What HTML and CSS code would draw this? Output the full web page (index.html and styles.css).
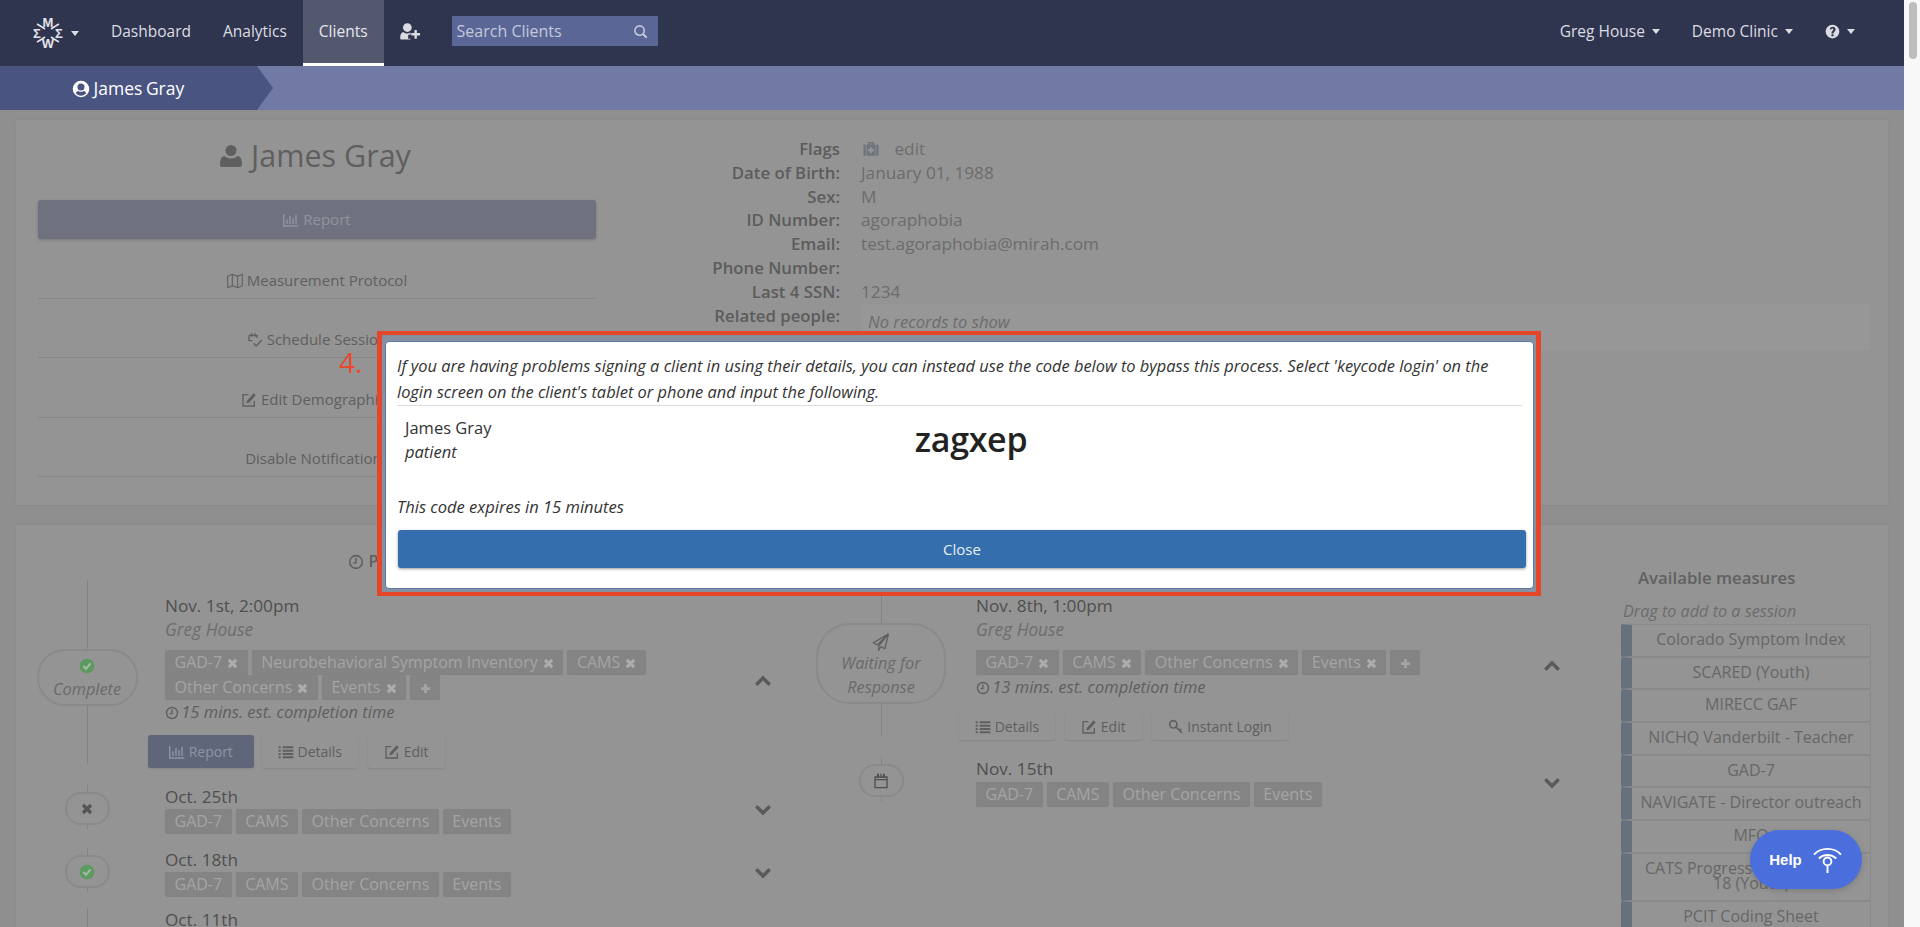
FILE: index.html

```html
<!DOCTYPE html>
<html>
	<head>
		<title>James Gray</title>
		<meta charset="UTF-8">
		<link rel="stylesheet" href="styles.css">
	</head>
	<body>
		<svg class="sprite">
			<symbol id="i-user" viewBox="0 0 24 24"><circle cx="12" cy="6.5" r="5.5"/><path d="M3 23c-1.5 0-2-1-2-2.500 0-4 .8-8 4.500-8.500 1.500 1.500 4 2.500 6.500 2.500s5-1 6.500-2.500c3.700.5 4.500 4.500 4.500 8.500 0 1.500-.5 2.500-2 2.500z"/></symbol>
			<symbol id="i-user-circle" viewBox="0 0 24 24"><path fill-rule="evenodd" d="M12 1a11 11 0 1 0 0 22 11 11 0 0 0 0-22zm0 3.500a4.700 4.700 0 1 1 0 9.400 4.700 4.700 0 0 1 0-9.400zm0 16.500c-2.800 0-5.300-1.200-7-3.200.6-1.800 2-3 3.600-3.300 1 .8 2.100 1.200 3.400 1.200s2.400-.4 3.400-1.200c1.600.3 3 1.500 3.600 3.300-1.700 2-4.200 3.200-7 3.200z"/></symbol>
			<symbol id="i-user-plus" viewBox="0 0 26 24"><circle cx="9" cy="7" r="5.500"/><path d="M1 22c-1 0-1-1-1-2 0-4 1-7 4-7.500 1.300 1.200 3 2 5 2 1.500 0 2.800-.4 4-1.200v2.700h-3v5h3v1z"/><path d="M18 10h3v4h4v3h-4v4h-3v-4h-4v-3h4z"/></symbol>
			<symbol id="i-search" viewBox="0 0 24 24"><circle cx="10.500" cy="10.500" r="7.500" fill="none" stroke="currentColor" stroke-width="2.500"/><path d="M16 16l6 6" fill="none" stroke="currentColor" stroke-width="3"/></symbol>
			<symbol id="i-question" viewBox="0 0 24 24"><path fill-rule="evenodd" d="M12 1a11 11 0 1 0 0 22 11 11 0 0 0 0-22zM10.300 16.500h3.400v3.200h-3.400zM7.500 8.500C8 6 10 4.500 12.300 4.500c2.600 0 4.700 1.700 4.700 4 0 3.500-3.300 3.500-3.300 6.500h-3.400c0-4 3-4.500 3-6.300 0-.9-.8-1.400-1.400-1.400-.9 0-1.500.6-2 1.600z"/></symbol>
			<symbol id="i-chart" viewBox="0 0 24 24"><path d="M1 3v18h22M6 11v7M10.500 6v12M15 9v9M19.500 4v14" fill="none" stroke="currentColor" stroke-width="2.200"/></symbol>
			<symbol id="i-map" viewBox="0 0 24 24"><path d="M1 5l7-3 8 3 7-3v17l-7 3-8-3-7 3zM8 2v17M16 5v17" fill="none" stroke="currentColor" stroke-width="1.600"/></symbol>
			<symbol id="i-calendar-check" viewBox="0 0 24 24"><path d="M3 5h12v4M3 5v8h5M7 2v5M12 2v5M14 21l-4-4M14 21l8-9" fill="none" stroke="currentColor" stroke-width="2"/></symbol>
			<symbol id="i-edit" viewBox="0 0 24 24"><path d="M11 4H3v17h17v-8" fill="none" stroke="currentColor" stroke-width="2"/><path d="M19 2l3 3-10 11-4 1 1-4z"/></symbol>
			<symbol id="i-clock" viewBox="0 0 24 24"><circle cx="12" cy="12" r="9.500" fill="none" stroke="currentColor" stroke-width="2.400"/><path d="M12 6v7H8" fill="none" stroke="currentColor" stroke-width="2.200"/></symbol>
			<symbol id="i-check" viewBox="0 0 24 24"><circle cx="12" cy="12" r="11" fill="#5d9a5f"/><path d="M6.500 12l4 4 7-8" fill="none" stroke="#a5bda7" stroke-width="3"/></symbol>
			<symbol id="i-times" viewBox="0 0 24 24"><path d="M4 4l16 16M20 4L4 20" fill="none" stroke="currentColor" stroke-width="6.500"/></symbol>
			<symbol id="i-plus" viewBox="0 0 24 24"><path d="M12 2v20M2 12h20" fill="none" stroke="currentColor" stroke-width="6"/></symbol>
			<symbol id="i-up" viewBox="0 0 24 16"><path d="M3 13l9-9 9 9" fill="none" stroke="currentColor" stroke-width="4.500"/></symbol>
			<symbol id="i-down" viewBox="0 0 24 16"><path d="M3 3l9 9 9-9" fill="none" stroke="currentColor" stroke-width="4.500"/></symbol>
			<symbol id="i-list" viewBox="0 0 24 24"><path d="M1 5h3M7 5h16M1 10h3M7 10h16M1 15h3M7 15h16M1 20h3M7 20h16" fill="none" stroke="currentColor" stroke-width="3"/></symbol>
			<symbol id="i-key" viewBox="0 0 24 24"><circle cx="8" cy="8" r="5.500" fill="none" stroke="currentColor" stroke-width="2.500"/><path d="M12 12l9 9M17 17l3-2" fill="none" stroke="currentColor" stroke-width="2.500"/></symbol>
			<symbol id="i-plane" viewBox="0 0 24 24"><path d="M22 1L2 13l5 3zM22 1L9 17v6l3-5 5 3z" fill="none" stroke="currentColor" stroke-width="1.700"/></symbol>
			<symbol id="i-calendar" viewBox="0 0 24 24"><path d="M3 6h18v16H3zM3 10h18" fill="none" stroke="currentColor" stroke-width="2"/><path d="M6 1h3v6H6zM11 1h2v6h-2zM15 1h3v6h-3z"/></symbol>
			<symbol id="i-medkit" viewBox="0 0 24 24"><path fill-rule="evenodd" d="M8 6V2.500h8V6h-2V4.500h-4V6zM2 6h3v15H2zM6 6h12v15H6zM19 6h3v15h-3zM10.500 9.500V12H8v3h2.500v2.500h3V15H16v-3h-2.500V9.500z"/></symbol>
		</svg>

		<div class="window">
			<div class="page">
				<nav class="navbar">
					<a class="brand">
						<svg class="logo" viewBox="0 0 34 34">
							<path d="M11 11L6 8M23 11l5-3M11 23l-5 3M23 23l5 3M11 11l3 2M23 11l-3 2M11 23l3-2M23 23l-3-2" fill="none" stroke="currentColor" stroke-width="1.600"/>
							<text x="17" y="11" class="logo-t">M</text>
							<text x="17" y="32" class="logo-t">W</text>
							<text x="6" y="21.500" class="logo-t">Σ</text>
							<text x="28" y="21.500" class="logo-t">Ʃ</text>
						</svg>
						<span class="caret"></span>
					</a>
					<a class="nav-link">Dashboard</a>
					<a class="nav-link">Analytics</a>
					<a class="nav-link active">Clients</a>
					<a class="nav-link nav-icon"><svg class="ic-plus"><use href="#i-user-plus"/></svg></a>
					<div class="search">
						<input type="text" placeholder="Search Clients">
						<svg class="ic-search"><use href="#i-search"/></svg>
					</div>
					<div class="nav-right">
						<a class="nav-link">Greg House <span class="caret"></span></a>
						<a class="nav-link">Demo Clinic <span class="caret"></span></a>
						<a class="nav-link"><svg class="ic-help"><use href="#i-question"/></svg> <span class="caret"></span></a>
					</div>
				</nav>

				<div class="crumbs">
					<div class="crumb"><svg class="ic-crumb"><use href="#i-user-circle"/></svg> James Gray</div>
				</div>

				<div class="content">
					<section class="panel patient">
						<div class="patient-left">
							<h1><svg class="ic-h1"><use href="#i-user"/></svg> James Gray</h1>
							<a class="btn-report"><svg class="ic"><use href="#i-chart"/></svg> Report</a>
							<a class="side-link"><span><svg class="ic"><use href="#i-map"/></svg> Measurement Protocol</span></a>
							<a class="side-link"><span><svg class="ic"><use href="#i-calendar-check"/></svg> Schedule Session</span></a>
							<a class="side-link"><span><svg class="ic"><use href="#i-edit"/></svg> Edit Demographics</span></a>
							<a class="side-link"><span>Disable Notifications</span></a>
						</div>
						<div class="patient-info">
							<div class="lbl">Flags</div>
							<div class="val"><svg class="ic-med"><use href="#i-medkit"/></svg> <span class="flag-edit">edit</span></div>
							<div class="lbl">Date of Birth:</div><div class="val">January 01, 1988</div>
							<div class="lbl">Sex:</div><div class="val">M</div>
							<div class="lbl">ID Number:</div><div class="val">agoraphobia</div>
							<div class="lbl">Email:</div><div class="val">test.agoraphobia@mirah.com</div>
							<div class="lbl">Phone Number:</div><div class="val"></div>
							<div class="lbl">Last 4 SSN:</div><div class="val">1234</div>
							<div class="lbl">Related people:</div><div class="val related"><em>No records to show</em></div>
						</div>
					</section>

					<section class="panel sessions">
						<div class="col past">
							<h2><svg class="ic"><use href="#i-clock"/></svg> Past Sessions</h2>

							<div class="session first">
								<div class="marker-col"><div class="pill pill-done">
									<svg class="ic-check"><use href="#i-check"/></svg>
									<em>Complete</em>
								</div></div>
								<div>
									<div class="date">Nov. 1st, 2:00pm</div>
									<div class="who">Greg House</div>
									<div class="tags">
										<span class="tag">GAD-7 <svg class="ic-x"><use href="#i-times"/></svg></span>
										<span class="tag">Neurobehavioral Symptom Inventory <svg class="ic-x"><use href="#i-times"/></svg></span>
										<span class="tag">CAMS <svg class="ic-x"><use href="#i-times"/></svg></span>
										<span class="tag">Other Concerns <svg class="ic-x"><use href="#i-times"/></svg></span>
										<span class="tag">Events <svg class="ic-x"><use href="#i-times"/></svg></span>
										<span class="tag"><svg class="ic-add"><use href="#i-plus"/></svg></span>
									</div>
									<div class="est"><svg class="ic"><use href="#i-clock"/></svg> 15 mins. est. completion time</div>
									<div class="actions">
										<a class="act act-report"><svg class="ic"><use href="#i-chart"/></svg> Report</a>
										<a class="act"><svg class="ic"><use href="#i-list"/></svg> Details</a>
										<a class="act"><svg class="ic"><use href="#i-edit"/></svg> Edit</a>
									</div>
								</div>
								<svg class="chev chev-open"><use href="#i-up"/></svg>
							</div>

							<div class="session">
								<div class="marker-col"><div class="dot"><svg class="ic-dotx"><use href="#i-times"/></svg></div></div>
								<div>
									<div class="date">Oct. 25th</div>
									<div class="tags">
										<span class="tag">GAD-7</span><span class="tag">CAMS</span><span class="tag">Other Concerns</span><span class="tag">Events</span>
									</div>
								</div>
								<svg class="chev"><use href="#i-down"/></svg>
							</div>

							<div class="session">
								<div class="marker-col"><div class="dot"><svg class="ic-check"><use href="#i-check"/></svg></div></div>
								<div>
									<div class="date">Oct. 18th</div>
									<div class="tags">
										<span class="tag">GAD-7</span><span class="tag">CAMS</span><span class="tag">Other Concerns</span><span class="tag">Events</span>
									</div>
								</div>
								<svg class="chev"><use href="#i-down"/></svg>
							</div>

							<div class="session session-last">
								<div class="marker-col"></div>
								<div>
									<div class="date">Oct. 11th</div>
								</div>
							</div>
						</div>

						<div class="col upcoming">
							<h2><svg class="ic"><use href="#i-clock"/></svg> Upcoming Sessions</h2>

							<div class="session first">
								<div class="marker-col"><div class="pill pill-wait">
									<svg class="ic-plane"><use href="#i-plane"/></svg>
									<em>Waiting for<br>Response</em>
								</div></div>
								<div>
									<div class="date">Nov. 8th, 1:00pm</div>
									<div class="who">Greg House</div>
									<div class="tags">
										<span class="tag">GAD-7 <svg class="ic-x"><use href="#i-times"/></svg></span>
										<span class="tag">CAMS <svg class="ic-x"><use href="#i-times"/></svg></span>
										<span class="tag">Other Concerns <svg class="ic-x"><use href="#i-times"/></svg></span>
										<span class="tag">Events <svg class="ic-x"><use href="#i-times"/></svg></span>
										<span class="tag"><svg class="ic-add"><use href="#i-plus"/></svg></span>
									</div>
									<div class="est"><svg class="ic"><use href="#i-clock"/></svg> 13 mins. est. completion time</div>
									<div class="actions">
										<a class="act"><svg class="ic"><use href="#i-list"/></svg> Details</a>
										<a class="act"><svg class="ic"><use href="#i-edit"/></svg> Edit</a>
										<a class="act"><svg class="ic"><use href="#i-key"/></svg> Instant Login</a>
									</div>
								</div>
								<svg class="chev chev-open"><use href="#i-up"/></svg>
							</div>

							<div class="session">
								<div class="marker-col"><div class="dot"><svg class="ic-cal"><use href="#i-calendar"/></svg></div></div>
								<div>
									<div class="date">Nov. 15th</div>
									<div class="tags">
										<span class="tag">GAD-7</span><span class="tag">CAMS</span><span class="tag">Other Concerns</span><span class="tag">Events</span>
									</div>
								</div>
								<svg class="chev"><use href="#i-down"/></svg>
							</div>
						</div>

						<div class="measures">
							<h3>Available measures</h3>
							<div class="drag"><em>Drag to add to a session</em></div>
							<div class="measure">Colorado Symptom Index</div>
							<div class="measure">SCARED (Youth)</div>
							<div class="measure">MIRECC GAF</div>
							<div class="measure">NICHQ Vanderbilt - Teacher</div>
							<div class="measure">GAD-7</div>
							<div class="measure">NAVIGATE - Director outreach</div>
							<div class="measure">MFQ</div>
							<div class="measure measure-tall">CATS Progress Monitoring 7-<br>18 (Youth)</div>
							<div class="measure">PCIT Coding Sheet</div>
						</div>
					</section>
				</div>
			</div>
			<div class="scrollbar"><div class="thumb"></div></div>
		</div>

		<!-- dialog + tutorial annotation, sits over the page -->
		<div class="step">4.</div>
		<div class="frame">
			<div class="modal">
				<p class="intro">If you are having problems signing a client in using their details, you can instead use the code below to bypass this process. Select 'keycode login' on the login screen on the client's tablet or phone and input the following.</p>
				<hr>
				<div class="code-row">
					<div>
						<div class="code-name">James Gray</div>
						<div class="code-role">patient</div>
					</div>
					<div class="code">zagxep</div>
				</div>
				<p class="expires">This code expires in 15 minutes</p>
				<button class="btn-close">Close</button>
			</div>
		</div>

		<div class="help">
			<span>Help</span>
			<svg class="ic-wifi" viewBox="0 0 32 30">
				<path d="M2 10C9 2 23 2 30 10M7 14c5-5 13-5 18 0" fill="none" stroke="#fff" stroke-width="2"/>
				<circle cx="16" cy="17" r="4" fill="none" stroke="#fff" stroke-width="2"/>
				<path d="M16 21v8" stroke="#fff" stroke-width="2"/>
			</svg>
		</div>
	</body>
</html>
```

FILE: styles.css

```css
/* common */
html, body {
	margin: 0; padding: 0; height: 100%; overflow: hidden;
}
body {
	font-family: "Open Sans", sans-serif; font-size: 16px; color: #5f5f5f; background-color: #f8f8f8;
}
.sprite {
	display: none;
}
svg {
	fill: currentColor;
}
.window {
	display: flex; height: 927px;
}
.page {
	width: 1904px; height: 927px; overflow: hidden; background-color: #8f8f8f;
}
.scrollbar {
	width: 16px; background-color: #f8f8f8;
}
.thumb {
	width: 8px; height: 57px; margin: 2px 0 0 5px; background-color: #bdbdbd; border-radius: 4px;
}
.ic {
	width: 16px; height: 16px; vertical-align: -3px;
}
em {
	font-style: italic;
}

/* navbar */
.navbar {
	display: flex; align-items: center; height: 66px; background-color: #30354f; color: #dcdde3; padding-right: 33px; font-size: 15.500px;
}
.brand {
	display: flex; align-items: center; padding: 0 16px 0 31px;
}
.logo {
	width: 34px; height: 34px; color: #e4e4e8;
}
.logo-t {
	font: bold 13px "Liberation Sans", sans-serif; text-anchor: middle;
}
.caret {
	display: inline-block; width: 0; height: 0; border-style: solid; border-width: 5px 4.500px 0; border-color: #dcdde3 transparent transparent; margin-left: 3px; vertical-align: 3px;
}
.brand .caret {
	margin-left: 6px;
}
.nav-link {
	display: block; height: 66px; line-height: 62px; padding: 0 16px; box-sizing: border-box; white-space: nowrap;
}
.nav-link.active {
	background-color: #53586f; border-bottom: 3px solid #fff; color: #e6e7ec;
}
.ic-plus {
	width: 21px; height: 19px; vertical-align: -4px;
}
.search {
	display: flex; align-items: center; width: 206px; height: 30px; margin: 0 0 4px 15px; background-color: #5a6695; color: #c5c9dc;
}
.search input {
	flex: 1; min-width: 0; height: 30px; padding: 0 5px; border: none; outline: none; background: none; font-family: "Open Sans", sans-serif; font-size: 16px; color: #c5c9dc;
}
.search input::placeholder {
	color: #c5c9dc; opacity: 1;
}
.ic-search {
	width: 15px; height: 15px; margin-right: 10px;
}
.nav-right {
	display: flex; margin-left: auto;
}
.ic-help {
	width: 15px; height: 15px; vertical-align: -2px;
}

/* breadcrumb */
.crumbs {
	height: 44px; background-color: #707aa4;
}
.crumb {
	width: 273px; height: 44px; box-sizing: border-box; padding-left: 72px; background-color: #4a5480; clip-path: polygon(0 0, 257px 0, 273px 22px, 257px 44px, 0 44px); color: #fff; font-size: 17.500px; line-height: 44px; word-spacing: -1px;
}
.ic-crumb {
	width: 18px; height: 18px; vertical-align: -3px;
}

/* panels */
.content {
	padding: 10px 16px 0;
}
.panel {
	background-color: #949494; box-shadow: 0 0 3px #8a8a8a;
}
.patient {
	display: flex; height: 385px; box-sizing: border-box; padding: 14px 0 0 22px;
}
.patient-left {
	width: 558px; text-align: center;
}
h1 {
	margin: 0 0 22px; padding-right: 4px; height: 44px; font-size: 30.500px; font-weight: 400; line-height: 42px; color: #5f5f5f;
}
.ic-h1 {
	width: 24px; height: 28px; vertical-align: -3px;
}
.btn-report {
	display: block; height: 39px; line-height: 39px; background-color: #6f727e; color: #8f92a0; border-radius: 3px; box-shadow: 0 1px 3px #777; font-size: 15px;
}
.side-link {
	display: flex; align-items: flex-end; justify-content: center; height: 59.600px; box-sizing: border-box; padding-bottom: 8px; border-bottom: 1px solid #878787; font-size: 15px; color: #5f5f5f;
}
.patient-info {
	display: grid; grid-template-columns: 244px 1fr; grid-auto-rows: 23.800px; column-gap: 21px; flex: 1; margin: 3px 18px 0 0; line-height: 23.800px;
}
.lbl {
	text-align: right; font-weight: 600; font-size: 16.800px; color: #5c5c5c; white-space: nowrap;
}
.val {
	color: #6c6c6c; font-size: 17.200px;
}
.ic-med {
	width: 20px; height: 18px; vertical-align: -3px; color: #6d747c;
}
.flag-edit {
	margin-left: 9px; color: #6d6d6d;
}
.related {
	height: 40px; padding: 6px 0 0 7px; font-size: 16.600px; background-color: #979797; line-height: 24px;
}

/* sessions */
.sessions {
	display: grid; grid-template-columns: 760px 760px 250px; column-gap: 20px; height: 500px; margin-top: 20px; padding-left: 14px;
}
.past {
	--marker: 114px; --gap: 21px; --chev: 54px;
}
.upcoming {
	--marker: 142px; --gap: 24px; --chev: 36px;
}
h2 {
	margin: 0 0 21px; padding-top: 24px; height: 24px; font-size: 16px; font-weight: 600; line-height: 24px; text-align: center; color: #5f5f5f;
}
.session {
	display: grid; grid-template-columns: var(--marker) 1fr var(--chev); column-gap: var(--gap); padding-bottom: 15px; position: relative;
}
.session.first {
	padding-bottom: 17px;
}
.session-last {
	margin-top: -3px;
}
.marker-col {
	display: flex; flex-direction: column; align-items: center; position: relative;
}
.marker-col::before {
	content: ""; position: absolute; left: 50%; top: 0; bottom: 4px; width: 1px; background-color: #838383;
}
.first .marker-col::before {
	top: -14px;
}
.pill, .dot {
	position: relative; display: flex; flex-direction: column; align-items: center; justify-content: center; box-sizing: border-box; background-color: #949494; border: 2px solid #8a8a8a; text-align: center;
}
.pill {
	color: #6a6a6a; font-size: 16.300px;
}
.pill-done {
	width: 101px; height: 57px; margin-top: 55px; border-radius: 28px; line-height: 30px; padding-top: 6px;
}
.pill-wait {
	width: 130px; height: 81px; margin-top: 29px; border-radius: 34px; line-height: 24px; padding-top: 5px;
}
.dot {
	width: 45px; height: 33px; margin-top: 7px; border-radius: 16px; color: #555;
}
.ic-check {
	width: 16px; height: 16px;
}
.ic-dotx {
	width: 12px; height: 12px;
}
.ic-plane {
	width: 18px; height: 18px; color: #5f5f5f;
}
.ic-cal {
	width: 16px; height: 16px; color: #4f4f4f;
}
.date {
	height: 24px; line-height: 24px; font-size: 17.200px; color: #4f4f4f; white-space: nowrap;
}
.first .date {
	font-weight: 500;
}
.who {
	height: 24px; line-height: 24px; font-style: italic; font-size: 17.300px; color: #6d6d6d; margin-bottom: 8px;
}
.tags {
	display: flex; flex-wrap: wrap; gap: 1px 4px;
}
.tag {
	height: 24px; line-height: 24px; padding: 0 9.500px; background-color: #848484; color: #a4a4a4; border-radius: 2px; box-shadow: 0 1px 1px #808080; white-space: nowrap; font-size: 16px;
}
.ic-x {
	width: 11px; height: 11px; margin-left: 1px; vertical-align: -1px; color: #adadad;
}
.ic-add {
	width: 11px; height: 11px; vertical-align: -1px; color: #a4a4a4;
}
.est {
	height: 24px; line-height: 24px; margin-top: 1px; font-style: italic; font-size: 16.500px; color: #5f5f5f;
}
.est .ic {
	width: 14px; height: 14px; margin-right: -2px; vertical-align: -2px;
}
.actions {
	display: flex; gap: 10px; margin: 11px 0 0 -17px;
}
.act {
	height: 33px; line-height: 33px; padding: 0 16px; border-radius: 3px; font-size: 14px; color: #5f5f5f; box-shadow: 0 1px 2px #858585;
}
.act-report {
	background-color: #5f6679; color: #8f93a5; padding: 0 21px; margin-right: -2px;
}
.upcoming .actions {
	margin-top: 14px;
}
.upcoming .act {
	height: 27px; line-height: 27px;
}
.upcoming .session:not(.first) .date {
	height: 25px;
}
.chev {
	width: 18px; height: 12px; color: #5a5a5a; margin-top: 19px; justify-self: center;
}
.chev-open {
	margin-top: 81px;
}
.upcoming .chev-open {
	margin-top: 66px;
}
.upcoming .session:not(.first) .chev {
	margin-top: 20px;
}

/* measures */
.measures {
	margin-left: 31px; width: 250px; color: #676767; font-size: 16px;
}
h3 {
	margin: 0; padding: 41px 0 0 17px; height: 24px; font-size: 16.800px; font-weight: 600; line-height: 24px; color: #616161;
}
.drag {
	height: 25px; margin-top: 9px; padding-left: 2px; line-height: 24px; font-size: 16.200px; color: #6c6c6c;
}
.measure {
	height: 32.700px; box-sizing: border-box; border: 1px solid #8a8a8a; border-left: 11px solid #67717d; border-radius: 2px; line-height: 29px; text-align: center; white-space: nowrap;
}
.measure-tall {
	height: 48px; line-height: 15px; padding-top: 7px;
}

/* dialog */
.step {
	position: absolute; left: 339px; top: 344px; font-size: 28px; line-height: 36px; color: #e8492c;
}
.frame {
	position: absolute; left: 377px; top: 331px; width: 1164px; height: 265px; box-sizing: border-box; border: solid #e5462a; border-width: 4px 5px; padding: 6px 2px 3px 3px; background-color: #87909e;
}
.modal {
	height: 100%; box-sizing: border-box; padding: 11px 8px 0 11px; background-color: #fff; border: 1px solid #5a77a8; border-radius: 4px; color: #333; font-size: 16.500px;
}
.intro {
	margin: 0 0 1px; line-height: 25.500px; font-style: italic; font-size: 16.400px;
}
hr {
	height: 1px; margin: 0 3px 0 0; border: none; background-color: #ddd;
}
.code-row {
	display: grid; grid-template-columns: 316px 500px; padding: 10px 0 0 8px;
}
.code-name {
	line-height: 24px;
}
.code-role {
	line-height: 24px; font-style: italic;
}
.code {
	text-align: center; font-size: 34px; font-weight: 600; line-height: 46px; letter-spacing: -.3px; color: #222;
}
.expires {
	margin: 31px 0 0; line-height: 24px; font-style: italic;
}
.btn-close {
	display: block; width: 1128px; height: 38px; margin: 11px 0 0 1px; border: none; border-radius: 3px; background-color: #356ead; color: #e8eef6; font-family: "Open Sans", sans-serif; font-size: 15px; box-shadow: 0 1px 3px #999;
}

/* help button */
.help {
	position: absolute; left: 1750px; top: 830px; display: flex; align-items: center; justify-content: center; gap: 10px; width: 112px; height: 59px; border-radius: 30px; background-color: #4a6fdc; color: #fff; font: bold 15px "Liberation Sans", sans-serif; box-shadow: 0 2px 6px rgba(0,0,0,.15);
}
.ic-wifi {
	width: 31px; height: 29px; fill: none;
}
```
